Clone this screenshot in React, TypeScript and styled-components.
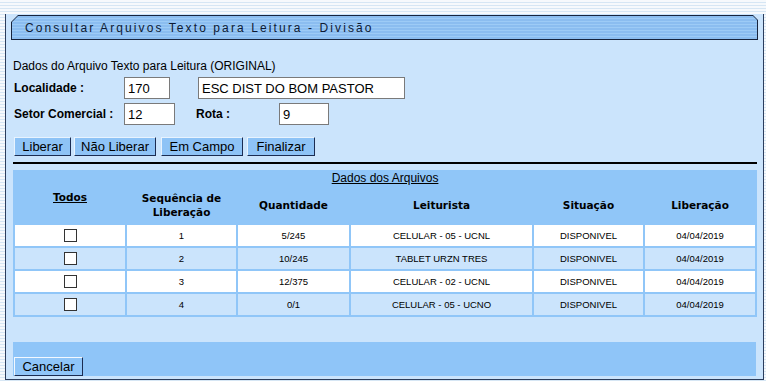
import React from "react";
import styled, { createGlobalStyle } from "styled-components";

const rows = [
  { seq: "1", qtd: "5/245", leit: "CELULAR - 05 - UCNL", sit: "DISPONIVEL", lib: "04/04/2019" },
  { seq: "2", qtd: "10/245", leit: "TABLET URZN TRES", sit: "DISPONIVEL", lib: "04/04/2019" },
  { seq: "3", qtd: "12/375", leit: "CELULAR - 02 - UCNL", sit: "DISPONIVEL", lib: "04/04/2019" },
  { seq: "4", qtd: "0/1", leit: "CELULAR - 05 - UCNO", sit: "DISPONIVEL", lib: "04/04/2019" },
];

const colWidths = [110, 109, 111, 181, 109, 110];

const App: React.FC = () => {
  return (
    <>
      <GlobalStyle />
      <Page>
        <Panel>
          <TitleFrame>
            <TitleBar>Consultar Arquivos Texto para Leitura - Divisão</TitleBar>
          </TitleFrame>
          <Content>
            <Intro>Dados do Arquivo Texto para Leitura (ORIGINAL)</Intro>
            <FormRow>
              <Label>Localidade :</Label>
              <TextInput $w={46} defaultValue="170" readOnly />
              <TextInput $w={207} $ml={28} defaultValue="ESC DIST DO BOM PASTOR" readOnly />
            </FormRow>
            <FormRow>
              <Label>Setor Comercial :</Label>
              <TextInput $w={51} defaultValue="12" readOnly />
              <Label $w={84} $ml={20}>Rota :</Label>
              <TextInput $w={50} defaultValue="9" readOnly />
            </FormRow>
            <ButtonRow>
              <ActionButton $w={57}>Liberar</ActionButton>
              <ActionButton $w={82} $ml={3}>Não Liberar</ActionButton>
              <ActionButton $w={82} $ml={5}>Em Campo</ActionButton>
              <ActionButton $w={68} $ml={4}>Finalizar</ActionButton>
            </ButtonRow>
            <Divider />
            <Grid>
              <colgroup>
                {colWidths.map((w, i) => (
                  <Col key={i} $w={w} />
                ))}
              </colgroup>
              <thead>
                <tr>
                  <Caption colSpan={6}>Dados dos Arquivos</Caption>
                </tr>
                <tr>
                  <HeadCell $top>
                    <u>Todos</u>
                  </HeadCell>
                  <HeadCell>
                    Sequência de
                    <br />
                    Liberação
                  </HeadCell>
                  <HeadCell>Quantidade</HeadCell>
                  <HeadCell>Leiturista</HeadCell>
                  <HeadCell>Situação</HeadCell>
                  <HeadCell>Liberação</HeadCell>
                </tr>
              </thead>
              <tbody>
                {rows.map((r, i) => (
                  <tr key={r.seq}>
                    <DataCell $alt={i % 2 === 1}>
                      <Check type="checkbox" />
                    </DataCell>
                    <DataCell $alt={i % 2 === 1}>{r.seq}</DataCell>
                    <DataCell $alt={i % 2 === 1}>{r.qtd}</DataCell>
                    <DataCell $alt={i % 2 === 1}>{r.leit}</DataCell>
                    <DataCell $alt={i % 2 === 1}>{r.sit}</DataCell>
                    <DataCell $alt={i % 2 === 1}>{r.lib}</DataCell>
                  </tr>
                ))}
              </tbody>
            </Grid>
            <Footer>
              <CancelButton>Cancelar</CancelButton>
            </Footer>
          </Content>
        </Panel>
      </Page>
    </>
  );
};

export default App;

// Styled Components
const GlobalStyle = createGlobalStyle`
  html, body {
    margin: 0;
    padding: 0;
  }
  body {
    font-family: "Liberation Sans", Arial, sans-serif;
    color: #000;
    background: repeating-linear-gradient(
      to bottom,
      #f6f9fc 0px,
      #f6f9fc 2px,
      #d6e6f4 2px,
      #d6e6f4 3px
    );
  }
`;

const Page = styled.div`
  width: 766px;
  height: 381px;
  padding: 14px 2px 1px 5px;
  box-sizing: border-box;
`;

const Panel = styled.div`
  height: 100%;
  box-sizing: border-box;
  background: #cbe4fc;
  border: 1px solid #2c3d5c;
  border-top: none;
  padding: 1px 5px 0 5px;
  display: flex;
  flex-direction: column;
`;

const TitleFrame = styled.div`
  flex: none;
  height: 25px;
  box-sizing: border-box;
  padding: 1px;
  background: #17243d;
  clip-path: polygon(7px 0, calc(100% - 5px) 0, 100% 5px, 100% 100%, 0 100%, 0 7px);
`;

const TitleBar = styled.div`
  height: 100%;
  box-sizing: border-box;
  padding-left: 13px;
  display: flex;
  align-items: center;
  font-size: 12px;
  letter-spacing: 2.1px;
  color: #0d1a33;
  clip-path: polygon(6px 0, calc(100% - 4px) 0, 100% 4px, 100% 100%, 0 100%, 0 6px);
  background: repeating-linear-gradient(
    to bottom,
    #8bbdf0 0px,
    #8bbdf0 2px,
    #9dcbf6 2px,
    #9dcbf6 3px
  );
`;

const Content = styled.div`
  flex: 1;
  display: flex;
  flex-direction: column;
  padding: 19px 1px 3px 2px;
`;

const Intro = styled.div`
  font-size: 12px;
  line-height: 14px;
  margin-bottom: 4px;
`;

const FormRow = styled.div`
  display: flex;
  align-items: center;
  height: 22px;
  margin-bottom: 4px;
`;

const Label = styled.span<{ $w?: number; $ml?: number }>`
  width: ${(p) => p.$w ?? 111}px;
  margin-left: ${(p) => p.$ml ?? 0}px;
  font-size: 12px;
  font-weight: bold;
  padding-left: 1px;
  box-sizing: border-box;
`;

const TextInput = styled.input<{ $w: number; $ml?: number }>`
  width: ${(p) => p.$w}px;
  height: 22px;
  margin-left: ${(p) => p.$ml ?? 0}px;
  box-sizing: border-box;
  border: 1px solid #7a7a7a;
  background: #fff;
  padding: 0 0 0 3px;
  font-family: "Liberation Sans", Arial, sans-serif;
  font-size: 13px;
  color: #000;
  outline: none;
`;

const ButtonRow = styled.div`
  display: flex;
  margin-top: 8px;
  padding-left: 1px;
`;

const ActionButton = styled.button<{ $w: number; $ml?: number }>`
  width: ${(p) => p.$w}px;
  height: 19px;
  margin-left: ${(p) => p.$ml ?? 0}px;
  padding: 0;
  box-sizing: border-box;
  background: #8ec3f6;
  border: 1px solid;
  border-color: #e8f3fe #1b2c52 #1b2c52 #e8f3fe;
  font-family: "Liberation Sans", Arial, sans-serif;
  font-size: 13px;
  line-height: 15px;
  color: #000;
  cursor: pointer;
`;

const Divider = styled.div`
  flex: none;
  height: 2px;
  background: #000;
  margin-top: 6px;
`;

const Grid = styled.table`
  margin-top: 6px;
  width: 744px;
  border-collapse: separate;
  border-spacing: 2px;
  background: #90c6f8;
  table-layout: fixed;
`;

const Col = styled.col<{ $w: number }>`
  width: ${(p) => p.$w}px;
`;

const Caption = styled.th`
  padding: 0;
  height: 12px;
  font-size: 12px;
  font-weight: normal;
  text-decoration: underline;
  line-height: 12px;
`;

const HeadCell = styled.th<{ $top?: boolean }>`
  box-sizing: border-box;
  height: 37px;
  padding: ${(p) => (p.$top ? "4px 0 0" : "0")};
  vertical-align: ${(p) => (p.$top ? "top" : "middle")};
  font-family: "DejaVu Sans", Verdana, sans-serif;
  font-size: 10.5px;
  font-weight: bold;
  line-height: 14px;
  text-align: center;
`;

const DataCell = styled.td<{ $alt?: boolean }>`
  height: 21px;
  padding: 0;
  background: ${(p) => (p.$alt ? "#cbe4fc" : "#ffffff")};
  font-size: 9.5px;
  text-align: center;
  vertical-align: middle;
`;

const Check = styled.input`
  appearance: none;
  width: 13px;
  height: 13px;
  margin: 2px 0 0;
  border: 1px solid #333;
  background: #fff;
  box-sizing: border-box;
`;

const Footer = styled.div`
  margin-top: auto;
  height: 34px;
  width: 743px;
  background: #8fc5f8;
  display: flex;
  align-items: flex-end;
`;

const CancelButton = styled.button`
  height: 19px;
  width: 69px;
  margin-left: 1px;
  padding: 0;
  box-sizing: border-box;
  background: #8fc5f8;
  border: 1px solid;
  border-color: #f2f8ff #1b2c52 #1b2c52 #f2f8ff;
  font-family: "Liberation Sans", Arial, sans-serif;
  font-size: 13px;
  line-height: 15px;
  color: #000;
`;
